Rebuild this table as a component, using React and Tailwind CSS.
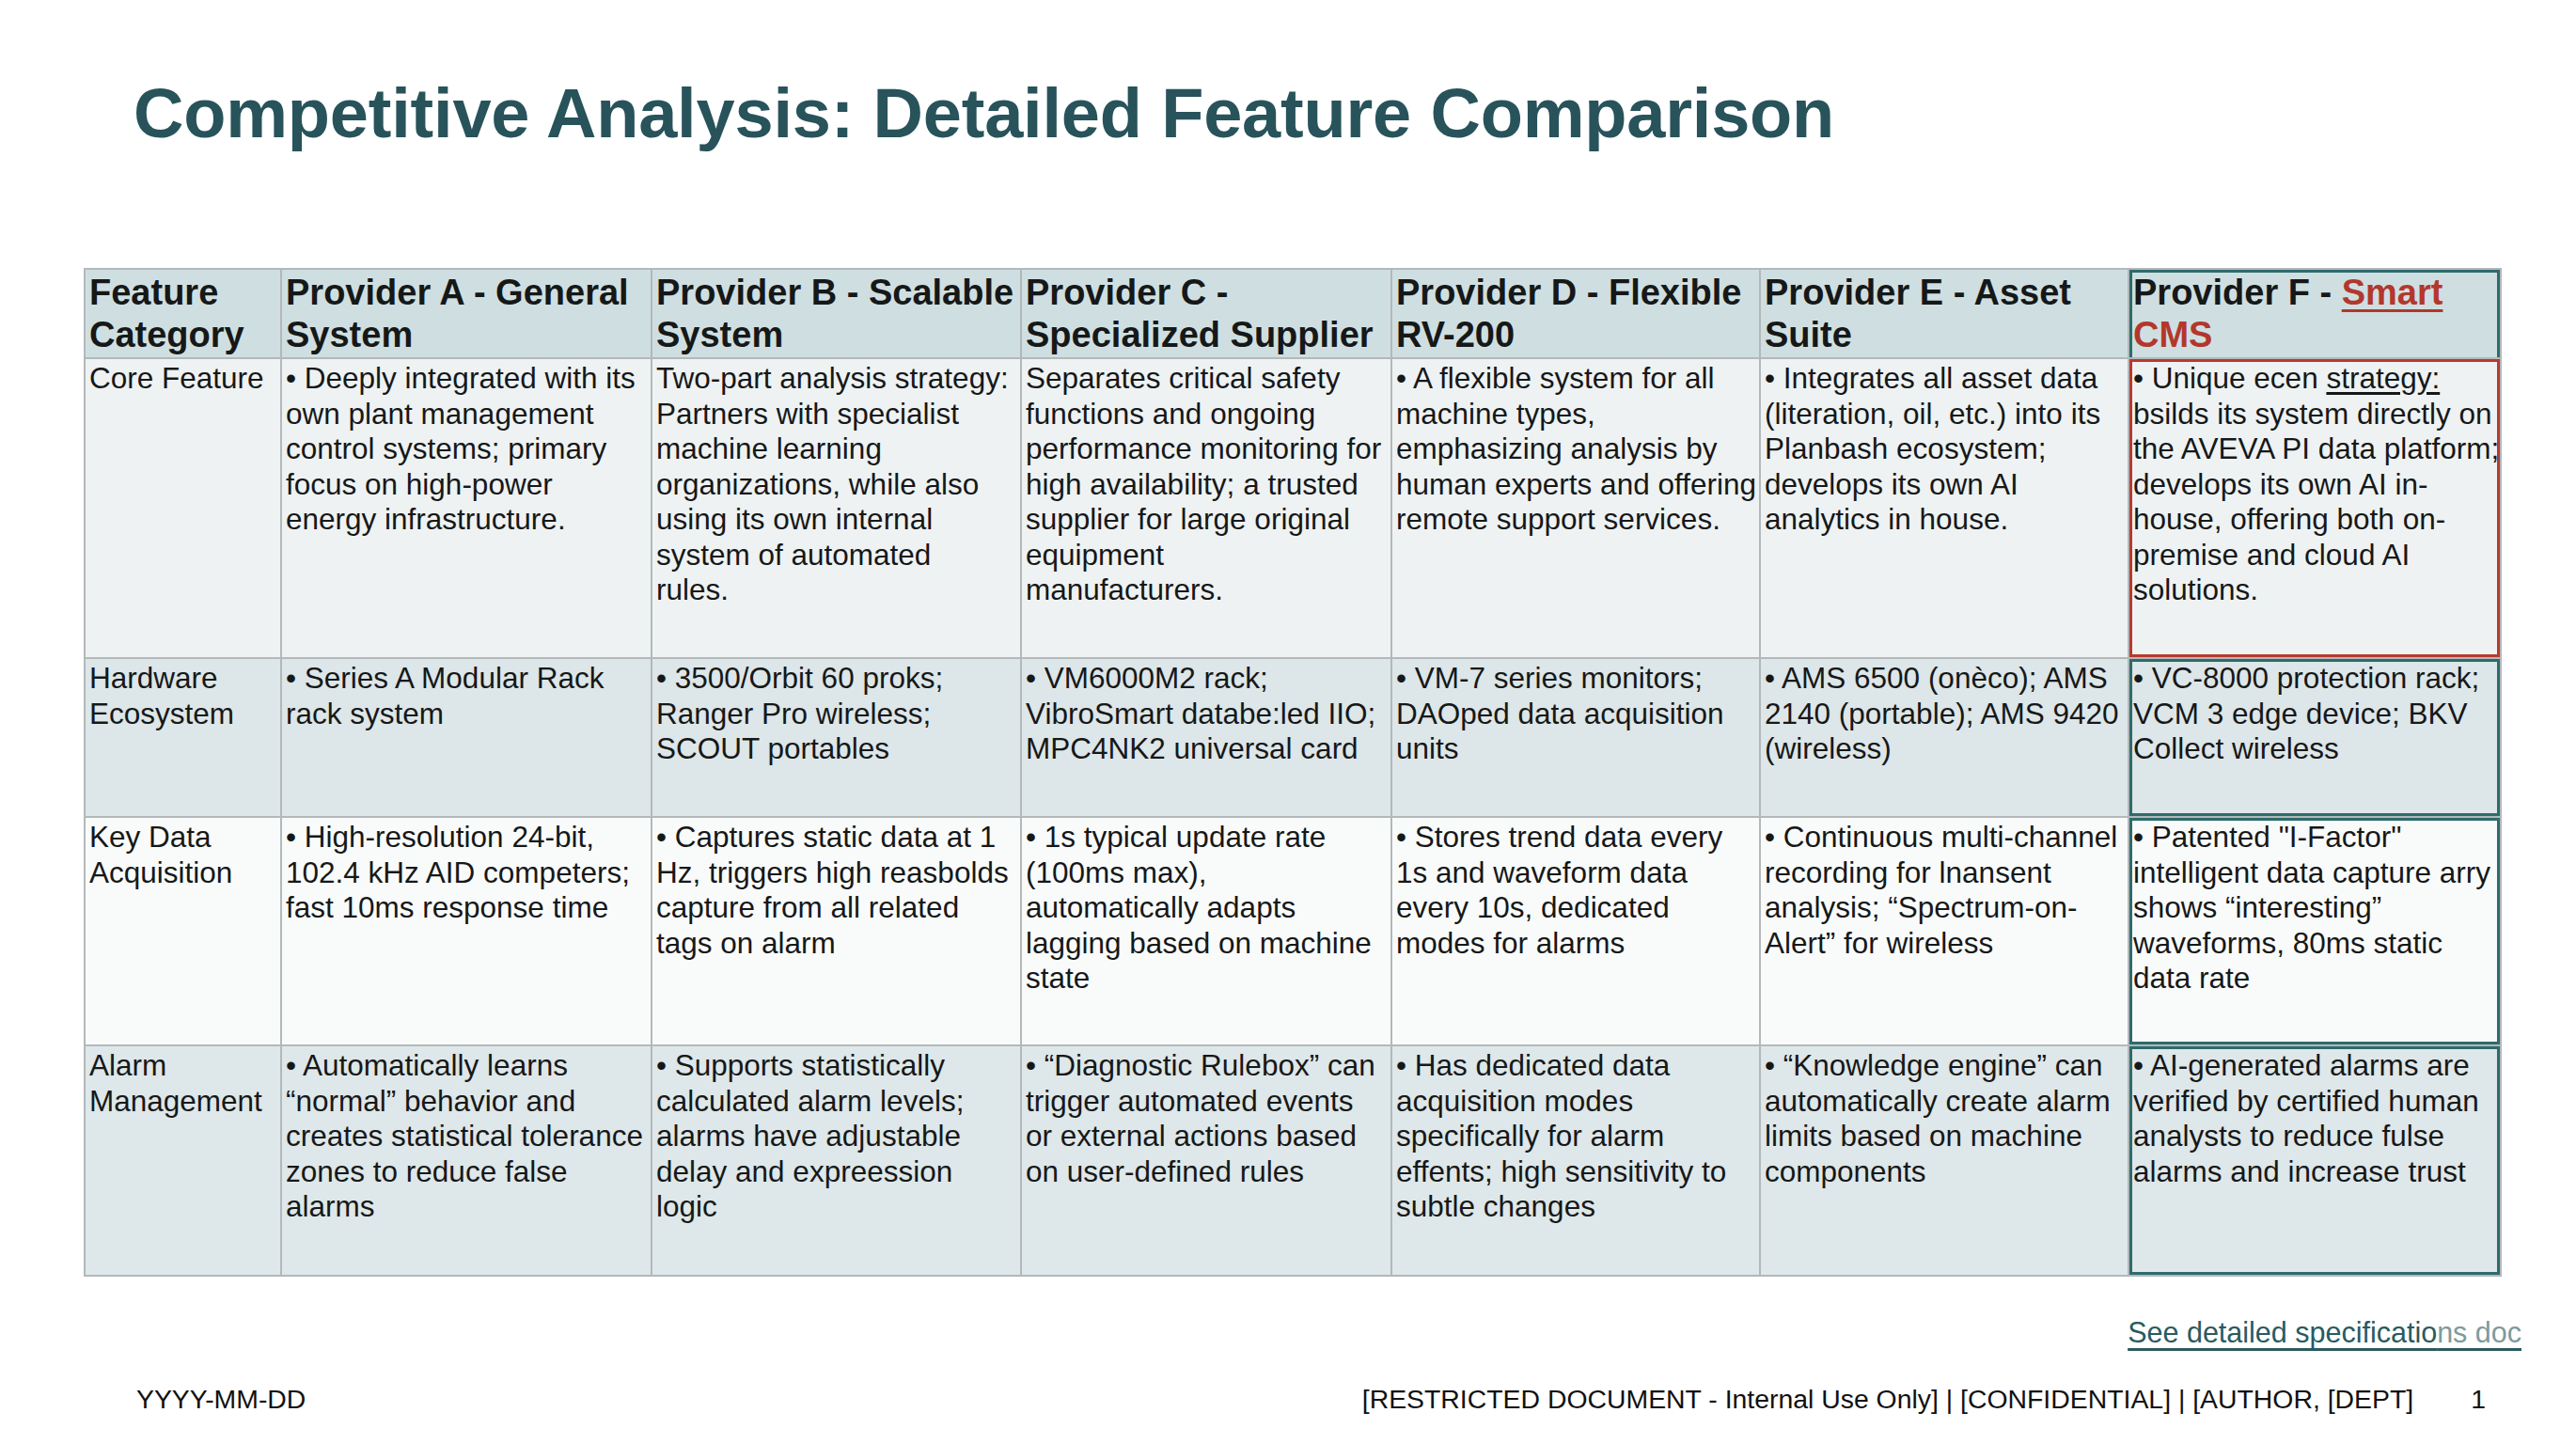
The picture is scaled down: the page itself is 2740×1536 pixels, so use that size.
import React from 'react';

const RED = 'text-[#b3372d]';

const header = [
  ['Feature', 'Category'],
  ['Provider A - General', 'System'],
  ['Provider B - Scalable', 'System'],
  ['Provider C -', 'Specialized Supplier'],
  ['Provider D - Flexible', 'RV-200'],
  ['Provider E - Asset', 'Suite'],
  [
    <>Provider F - <span className={`${RED} underline decoration-[3px] underline-offset-[5px]`}>Smart</span></>,
    <span className={RED}>CMS</span>,
  ],
];

// each row: label lines, background, then one list of lines per provider
const rows = [
  {
    bg: 'bg-[#eef2f3]',
    height: 'h-[319px]',
    cells: [
      ['Core Feature'],
      ['• Deeply integrated with its', 'own plant management', 'control systems; primary', 'focus on high-power', 'energy infrastructure.'],
      ['Two-part analysis strategy:', 'Partners with specialist', 'machine learning', 'organizations, while also', 'using its own internal', 'system of automated', 'rules.'],
      ['Separates critical safety', 'functions and ongoing', 'performance monitoring for', 'high availability; a trusted', 'supplier for large original', 'equipment', 'manufacturers.'],
      ['• A flexible system for all', 'machine types,', 'emphasizing analysis by', 'human experts and offering', 'remote support services.'],
      ['• Integrates all asset data', '(literation, oil, etc.) into its', 'Planbash ecosystem;', 'develops its own AI', 'analytics in house.'],
      [
        <>• Unique ecen <span className="underline underline-offset-[4px]">strategy:</span></>,
        'bsilds its system directly on',
        'the AVEVA PI data platform;',
        'develops its own AI in-',
        'house, offering both on-',
        'premise and cloud AI',
        'solutions.',
      ],
    ],
  },
  {
    bg: 'bg-[#dde6e8]',
    height: 'h-[169px]',
    cells: [
      ['Hardware', 'Ecosystem'],
      ['• Series A Modular Rack', 'rack system'],
      ['• 3500/Orbit 60 proks;', 'Ranger Pro wireless;', 'SCOUT portables'],
      ['• VM6000M2 rack;', 'VibroSmart databe:led IIO;', 'MPC4NK2 universal card'],
      ['• VM-7 series monitors;', 'DAOped data acquisition', 'units'],
      ['• AMS 6500 (onèco); AMS', '2140 (portable); AMS 9420', '(wireless)'],
      ['• VC-8000 protection rack;', 'VCM 3 edge device; BKV', 'Collect wireless'],
    ],
  },
  {
    bg: 'bg-[#f9fbfb]',
    height: 'h-[243px]',
    cells: [
      ['Key Data', 'Acquisition'],
      ['• High-resolution 24-bit,', '102.4 kHz AID competers;', 'fast 10ms response time'],
      ['• Captures static data at 1', 'Hz, triggers high reasbolds', 'capture from all related', 'tags on alarm'],
      ['• 1s typical update rate', '(100ms max),', 'automatically adapts', 'lagging based on machine', 'state'],
      ['• Stores trend data every', '1s and waveform data', 'every 10s, dedicated', 'modes for alarms'],
      ['• Continuous multi-channel', 'recording for lnansent', 'analysis; “Spectrum-on-', 'Alert” for wireless'],
      ['• Patented "I-Factor"', 'intelligent data capture arry', 'shows “interesting”', 'waveforms, 80ms static', 'data rate'],
    ],
  },
  {
    bg: 'bg-[#dee7e9]',
    height: 'h-[245px]',
    cells: [
      ['Alarm', 'Management'],
      ['• Automatically learns', '“normal” behavior and', 'creates statistical tolerance', 'zones to reduce false', 'alarms'],
      ['• Supports statistically', 'calculated alarm levels;', 'alarms have adjustable', 'delay and expreession', 'logic'],
      ['• “Diagnostic Rulebox” can', 'trigger automated events', 'or external actions based', 'on user-defined rules'],
      ['• Has dedicated data', 'acquisition modes', 'specifically for alarm', 'effents; high sensitivity to', 'subtle changes'],
      ['• “Knowledge engine” can', 'automatically create alarm', 'limits based on machine', 'components'],
      ['• AI-generated alarms are', 'verified by certified human', 'analysts to reduce fulse', 'alarms and increase trust'],
    ],
  },
];

const Lines = ({ lines }) =>
  lines.map((line, i) => (
    <div key={i} className="whitespace-nowrap">
      {line}
    </div>
  ));

const cellBase = 'border-r-2 border-b-2 border-[#b3b8ba] px-[4px]';

const App = () => {
  return (
    <div className="w-[2740px] h-[1536px] bg-white font-['Liberation_Sans',Arial,sans-serif] text-[#161818] flex flex-col overflow-hidden">
      <h1 className="pl-[142px] pt-[78px] text-[74px] leading-[85px] font-bold text-[#28535b] tracking-[-0.2px]">
        Competitive Analysis: Detailed Feature Comparison
      </h1>

      <div className="ml-[89px] mt-[122px] w-[2572px] border-l-2 border-t-2 border-[#b3b8ba]">
        {/* header row */}
        <div className="grid grid-cols-[209px_394px_393px_394px_392px_392px_396px] h-[95px] bg-[#cfdfe1] text-[38px] leading-[45px] font-bold">
          {header.map((lines, i) => (
            <div
              key={i}
              className={`${cellBase} pt-[2px] ${i === 6 ? 'shadow-[inset_3px_3px_0_0_#2e6b6c,inset_-3px_0_0_0_#2e6b6c]' : ''}`}
            >
              <Lines lines={lines} />
            </div>
          ))}
        </div>

        {rows.map((row, r) => (
          <div
            key={r}
            className={`grid grid-cols-[209px_394px_393px_394px_392px_392px_396px] ${row.height} ${row.bg} text-[31.5px] leading-[37.5px]`}
          >
            {row.cells.map((lines, i) => {
              let edge = '';
              if (i === 6) {
                edge = r === 0 ? 'shadow-[inset_0_0_0_3px_#b83a2f]' : 'shadow-[inset_0_0_0_3px_#2e6b6c]';
              }
              return (
                <div key={i} className={`${cellBase} pt-[2px] ${edge}`}>
                  <Lines lines={lines} />
                </div>
              );
            })}
          </div>
        ))}
      </div>

      <div className="flex justify-end pr-[58px] mt-[41px]">
        <a className="text-[30.5px] leading-[37px] text-[#2a5a60] underline decoration-[3px] underline-offset-[6px] decoration-[#2a5a60]">
          See detailed specificatio<span className="text-[#7e9a9c]">ns doc</span>
        </a>
      </div>

      <div className="flex items-center pl-[145px] pr-[96px] mt-[36px] text-[28.4px] leading-[32px] text-[#111]">
        <span>YYYY-MM-DD</span>
        <span className="ml-auto">[RESTRICTED DOCUMENT - Internal Use Only] | [CONFIDENTIAL] | [AUTHOR, [DEPT]</span>
        <span className="ml-[61px]">1</span>
      </div>
    </div>
  );
};

export default App;
